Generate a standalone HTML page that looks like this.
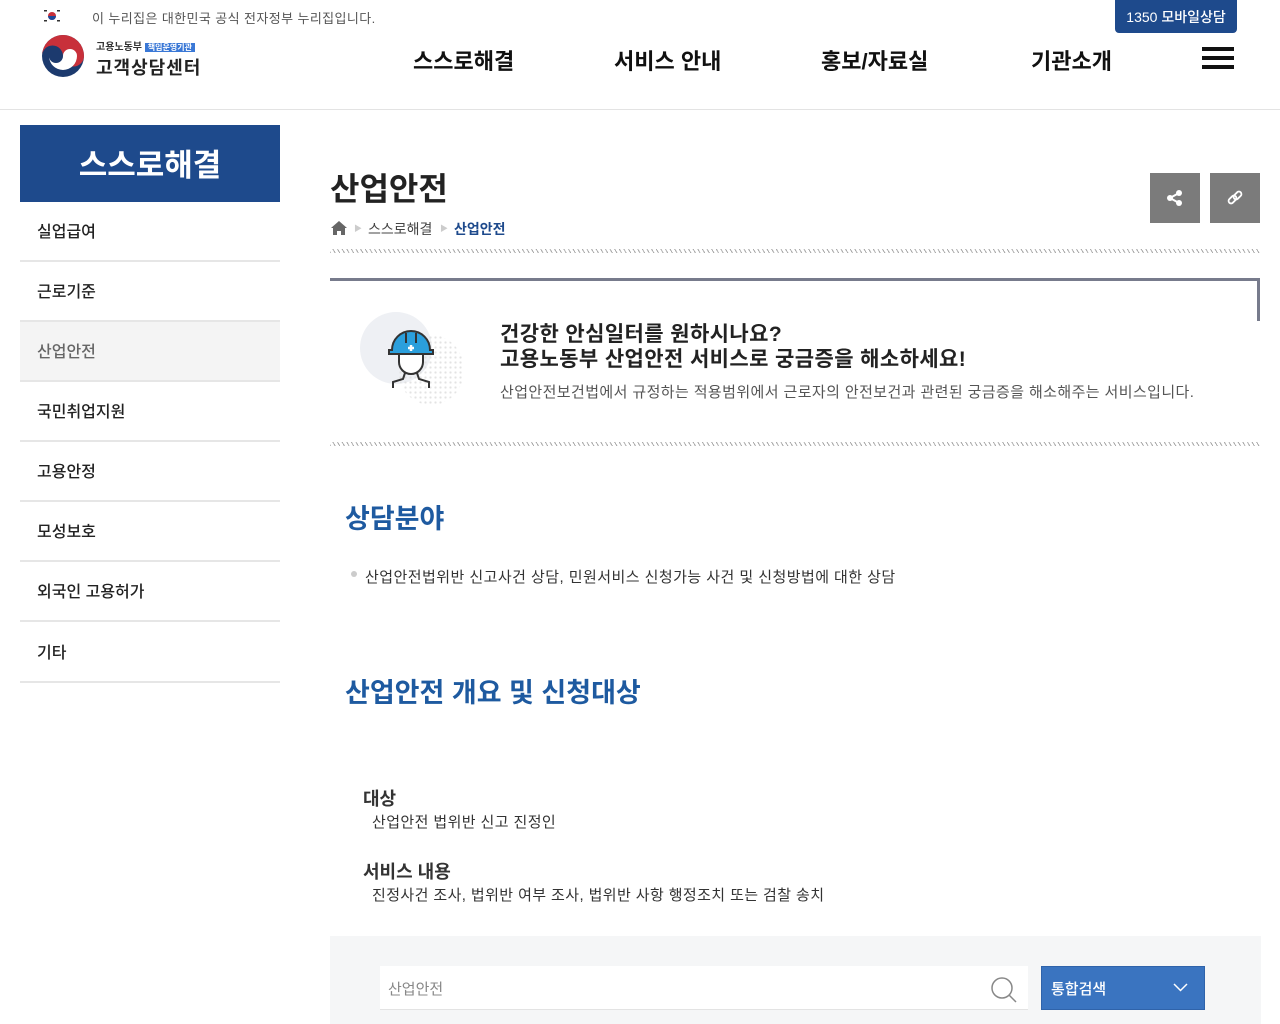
<!DOCTYPE html>
<html><head><meta charset="utf-8"><style>
*{margin:0;padding:0;box-sizing:border-box}
body{width:1280px;height:1024px;overflow:hidden;background:#fff;font-family:"Liberation Sans","Noto Sans CJK KR",sans-serif;color:#222;position:relative}
.a{position:absolute;white-space:nowrap}
.nav{font-size:22px;font-weight:700;color:#111;top:44px}
.side{position:absolute;left:20px;width:260px;height:60px;border-bottom:2px solid #e6e6e6;font-size:16px;font-weight:500;padding-left:17px;line-height:62px;color:#222}
.dash{position:absolute;left:330px;width:930px;height:4px;background:repeating-linear-gradient(60deg,#aaa 0 1px,transparent 1px 4px)}
</style></head><body>
<div class="a" style="left:44px;top:9px;width:16px;height:14px">
<svg width="16" height="14" viewBox="0 0 16 14"><circle cx="8" cy="7" r="4" fill="#c8303a"/><path d="M4 7a4 4 0 0 0 8 0z" fill="#1f4a9a"/><g fill="#333"><rect x="0" y="1" width="3" height="1.5"/><rect x="13" y="1" width="3" height="1.5"/><rect x="0" y="11" width="3" height="1.5"/><rect x="13" y="11" width="3" height="1.5"/></g></svg></div>
<div class="a" style="left:92px;top:8px;font-size:13px;color:#555;letter-spacing:0.4px">이 누리집은 대한민국 공식 전자정부 누리집입니다.</div>
<div class="a" style="left:1115px;top:0;width:122px;height:33px;background:#1e4a8c;border-radius:0 0 4px 4px;color:#fff;font-size:14px;font-weight:500;text-align:center;line-height:34px">1350 모바일상담</div>
<svg class="a" style="left:41px;top:34px" width="44" height="44" viewBox="0 0 44 44"><circle cx="22" cy="22" r="21" fill="#1c3a6e"/><path d="M1 22A21 21 0 0 1 43 22A10.5 10.5 0 0 1 22 22A10.5 10.5 0 0 0 1 22z" fill="#c8303a"/><path d="M8 22a14 14 0 0 0 28 0a7 7 0 0 0-14 0a7 7 0 0 1-14 0z" fill="#fff"/></svg>
<div class="a" style="left:96px;top:38px;font-size:10px;font-weight:700;color:#333">고용노동부 <span style="background:#3a78d6;color:#fff;font-size:8px;padding:0 3px">책임운영기관</span></div>
<div class="a" style="left:96px;top:54px;font-size:18px;font-weight:700;color:#222;letter-spacing:1px">고객상담센터</div>
<div class="a nav" style="left:413px">스스로해결</div>
<div class="a nav" style="left:614px">서비스 안내</div>
<div class="a nav" style="left:821px">홍보/자료실</div>
<div class="a nav" style="left:1031px">기관소개</div>
<div class="a" style="left:1202px;top:47px;width:32px;height:22px;border-top:4px solid #111;border-bottom:4px solid #111"><div style="margin-top:5px;height:4px;background:#111"></div></div>
<div class="a" style="left:0;top:109px;width:1280px;height:1px;background:#e3e3e3"></div>

<div class="a" style="left:20px;top:125px;width:260px;height:77px;background:#1e4a8c;color:#fff;font-size:31px;font-weight:700;text-align:center;line-height:82px">스스로해결</div>
<div class="side" style="top:202px">실업급여</div>
<div class="side" style="top:262px">근로기준</div>
<div class="side" style="top:322px;background:#f4f4f4;color:#666">산업안전</div>
<div class="side" style="top:382px">국민취업지원</div>
<div class="side" style="top:442px">고용안정</div>
<div class="side" style="top:502px">모성보호</div>
<div class="side" style="top:562px">외국인 고용허가</div>
<div class="side" style="top:623px">기타</div>

<div class="a" style="left:330px;top:164px;font-size:32px;font-weight:700;color:#222">산업안전</div>
<svg class="a" style="left:331px;top:220px" width="16" height="15" viewBox="0 0 16 15"><path d="M8 1L0 8h2v7h4v-4h4v4h4V8h2z" fill="#666"/></svg>
<div class="a" style="left:354px;top:223px;font-size:8px;color:#ccc">▶</div>
<div class="a" style="left:368px;top:219px;font-size:14px;color:#444">스스로해결</div>
<div class="a" style="left:440px;top:223px;font-size:8px;color:#ccc">▶</div>
<div class="a" style="left:454px;top:219px;font-size:14px;font-weight:700;color:#1e4a8c">산업안전</div>
<div class="a" style="left:1150px;top:173px;width:50px;height:50px;background:#7b7b7b"><svg style="margin:16px" width="18" height="18" viewBox="0 0 18 18"><g fill="#fff"><circle cx="13" cy="4" r="3"/><circle cx="4" cy="9" r="3"/><circle cx="13" cy="14" r="3"/></g><path d="M13 4L4 9l9 5" stroke="#fff" stroke-width="2" fill="none"/></svg></div>
<div class="a" style="left:1210px;top:173px;width:50px;height:50px;background:#7b7b7b"><svg style="margin:16px" width="18" height="18" viewBox="0 0 18 18"><g fill="none" stroke="#fff" stroke-width="1.8"><rect x="2" y="8" width="9" height="5" rx="2.5" transform="rotate(-45 6.5 10.5)"/><rect x="7" y="4" width="9" height="5" rx="2.5" transform="rotate(-45 11.5 6.5)"/></g></svg></div>
<div class="dash" style="top:249px"></div>
<div class="a" style="left:330px;top:278px;width:930px;height:3px;background:#777b8c"></div>
<div class="a" style="left:1257px;top:278px;width:3px;height:43px;background:#777b8c"></div>

<div class="a" style="left:360px;top:312px;width:72px;height:72px;border-radius:50%;background:#eef0f4"></div>
<div class="a" style="left:398px;top:335px;width:66px;height:70px;border-radius:50%;background:radial-gradient(#ddd 1px,transparent 1.3px) 0 0/5px 5px;opacity:.8"></div>
<svg class="a" style="left:386px;top:326px" width="50" height="64" viewBox="0 0 50 64"><path d="M13 24v12a12 12 0 0 0 24 0V24" fill="#fff" stroke="#333" stroke-width="2"/><path d="M6 24a19 19 0 0 1 38 0h3v4H3v-4z" fill="#2b9fdc" stroke="#333" stroke-width="2"/><path d="M20 7v10M30 7v10" stroke="#333" stroke-width="2"/><path d="M22 22h6M25 19v6" stroke="#fff" stroke-width="2.5"/><path d="M19 47l-2 6-10 3v6M31 47l2 6 10 3v6" fill="none" stroke="#333" stroke-width="2"/></svg>
<div class="a" style="left:500px;top:322px;font-size:21px;font-weight:700;color:#222;line-height:25px;letter-spacing:0.4px">건강한 안심일터를 원하시나요?<br>고용노동부 산업안전 서비스로 궁금증을 해소하세요!</div>
<div class="a" style="left:500px;top:381px;font-size:15px;color:#555;letter-spacing:0.4px">산업안전보건법에서 규정하는 적용범위에서 근로자의 안전보건과 관련된 궁금증을 해소해주는 서비스입니다.</div>
<div class="dash" style="top:442px"></div>

<div class="a" style="left:345px;top:497px;font-size:27px;font-weight:700;color:#1e5aa0">상담분야</div>
<div class="a" style="left:351px;top:571px;width:6px;height:6px;border-radius:50%;background:#ccc"></div>
<div class="a" style="left:365px;top:566px;font-size:15px;color:#333;letter-spacing:0.45px">산업안전법위반 신고사건 상담, 민원서비스 신청가능 사건 및 신청방법에 대한 상담</div>
<div class="a" style="left:345px;top:671px;font-size:27px;font-weight:700;color:#1e5aa0">산업안전 개요 및 신청대상</div>
<div class="a" style="left:363px;top:785px;font-size:18px;font-weight:700;color:#333">대상</div>
<div class="a" style="left:372px;top:811px;font-size:15px;color:#333;letter-spacing:0.4px">산업안전 법위반 신고 진정인</div>
<div class="a" style="left:363px;top:858px;font-size:18px;font-weight:700;color:#333">서비스 내용</div>
<div class="a" style="left:372px;top:884px;font-size:15px;color:#333;letter-spacing:0.4px">진정사건 조사, 법위반 여부 조사, 법위반 사항 행정조치 또는 검찰 송치</div>

<div class="a" style="left:330px;top:936px;width:931px;height:88px;background:#f5f6f7"></div>
<div class="a" style="left:380px;top:966px;width:648px;height:44px;background:#fff;border-bottom:1px solid #e3e3e3"></div>
<div class="a" style="left:388px;top:978px;font-size:15px;color:#888">산업안전</div>
<svg class="a" style="left:990px;top:976px" width="28" height="28" viewBox="0 0 28 28"><circle cx="12" cy="12" r="10" fill="none" stroke="#888" stroke-width="1.5"/><path d="M19 19l7 7" stroke="#888" stroke-width="1.5"/></svg>
<div class="a" style="left:1041px;top:966px;width:164px;height:44px;background:#3a74c0;border:1px solid #2f63aa"></div>
<div class="a" style="left:1051px;top:978px;font-size:15px;font-weight:500;color:#fff">통합검색</div>
<svg class="a" style="left:1173px;top:983px" width="15" height="9" viewBox="0 0 15 9"><path d="M1 1l6.5 6.5L14 1" fill="none" stroke="#fff" stroke-width="1.5"/></svg>
</body></html>
